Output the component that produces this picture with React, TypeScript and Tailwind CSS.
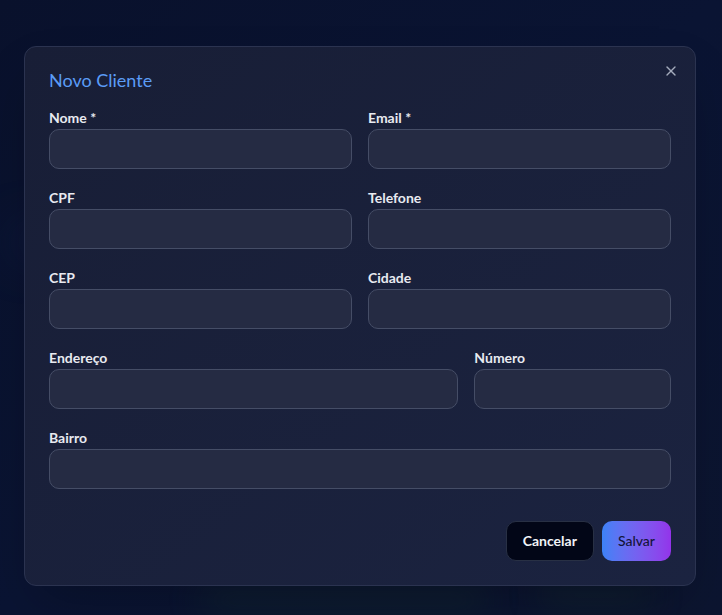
import { X } from "lucide-react";

const font = { fontFamily: 'Lato, "Noto Sans", sans-serif' };

function Field({ label, className = "" }: { label: string; className?: string }) {
  return (
    <div className={`flex flex-col ${className}`}>
      <label className="mb-px text-sm font-bold leading-5 text-[#e8eaf0]">{label}</label>
      <input
        type="text"
        className="h-10 w-full rounded-[10px] border border-[#454d66] bg-[#252b43] px-3 text-sm text-white outline-none"
      />
    </div>
  );
}

export default function App() {
  return (
    <div
      className="relative min-h-screen w-full overflow-hidden bg-[#081029]"
      style={font}
    >
      {/* blurred page behind the overlay */}
      <div className="absolute inset-0">
        <div className="absolute left-0 top-0 h-[615px] w-[722px] bg-gradient-to-br from-[#09112c] via-[#0a1433] to-[#0c1530]" />
        <div className="absolute left-[10px] top-[230px] h-6 w-40 rounded-full bg-[#13204a] opacity-60 blur-xl" />
        <div className="absolute left-[200px] top-[590px] h-5 w-72 rounded-full bg-[#12282f] opacity-70 blur-lg" />
        <div className="absolute left-[540px] top-[585px] h-5 w-28 rounded-full bg-[#142a2e] opacity-60 blur-lg" />
      </div>

      <div className="relative flex justify-start pl-6 pt-[46px]">
        <div className="relative w-[672px] rounded-xl border border-[#2b3350] bg-gradient-to-br from-[#181e36] to-[#1b2340] p-6 shadow-2xl">
          <button className="absolute right-4 top-4 text-[#b4bccb] opacity-90">
            <X className="h-4 w-4" strokeWidth={2} />
          </button>

          <h2 className="text-lg leading-none text-[#5b9cf6]">Novo Cliente</h2>

          <form className="mt-[19px]">
            <div className="grid grid-cols-2 gap-x-4 gap-y-[19px]">
              <Field label="Nome *" />
              <Field label="Email *" />
              <Field label="CPF" />
              <Field label="Telefone" />
              <Field label="CEP" />
              <Field label="Cidade" />
            </div>
            <div className="mt-[19px] grid grid-cols-3 gap-x-4">
              <Field label="Endereço" className="col-span-2" />
              <Field label="Número" />
            </div>
            <Field label="Bairro" className="mt-[19px]" />

            <div className="mt-8 flex justify-end gap-2">
              <button
                type="button"
                className="h-10 rounded-[10px] border border-[#283044] bg-[#020617] px-4 text-sm font-bold text-[#f1f3f7]"
              >
                Cancelar
              </button>
              <button
                type="button"
                className="h-10 rounded-[10px] bg-gradient-to-r from-[#3b82f6] to-[#9333ea] px-4 text-sm font-medium text-[#14143a]"
              >
                Salvar
              </button>
            </div>
          </form>
        </div>
      </div>
    </div>
  );
}
